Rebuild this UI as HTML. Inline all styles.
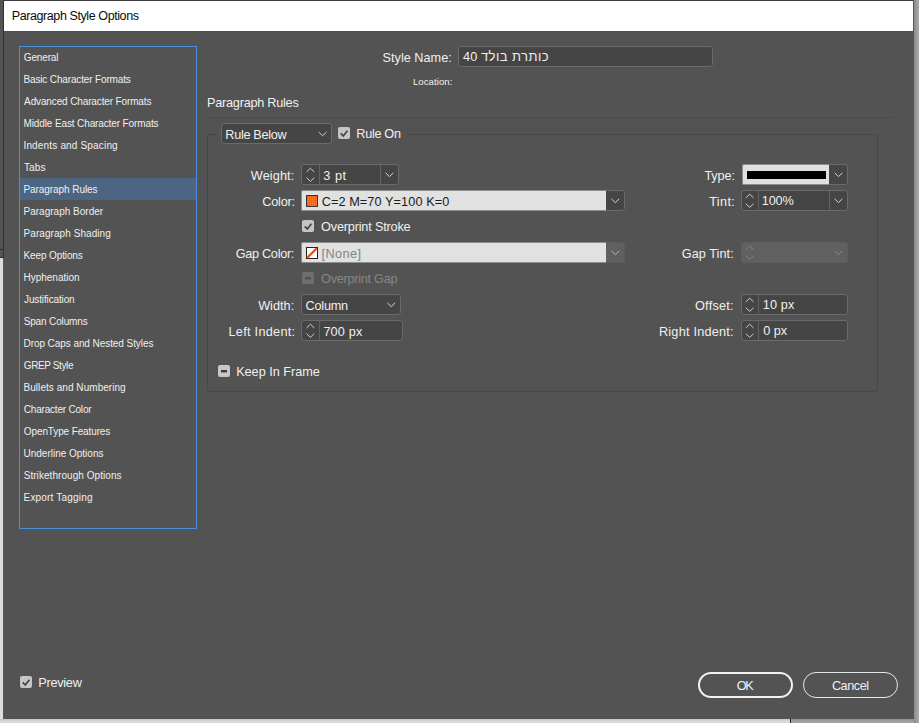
<!DOCTYPE html>
<html lang="en"><head><meta charset="utf-8"><title>Paragraph Style Options</title>
<style>
html,body{margin:0;padding:0}
body{width:919px;height:723px;position:relative;overflow:hidden;background:#a2a2a2;font-family:"Liberation Sans","DejaVu Sans",sans-serif}
.bg{position:absolute}
#dlg{position:absolute;left:3px;top:0;width:911px;height:719px;background:#535353;box-sizing:border-box}
#titlebar{position:absolute;left:4px;top:1px;width:909px;height:30px;background:#fff}
.t,.ttl,.li{position:absolute;white-space:pre;line-height:30px;height:30px;color:#f0f0f0}
ul{margin:0;padding:0;list-style:none}
.btn{position:absolute;width:95px;height:26px;box-sizing:border-box;border-radius:13px;background:none;padding:0;margin:0;font:inherit;color:inherit;overflow:visible}
.box{position:absolute;box-sizing:border-box;border:1px solid #6a6a6a;border-radius:3px;background:#454545}
.lf{position:absolute;box-sizing:border-box;background:#e1e1e1;border:1px solid #8e8e8e;border-right:0;border-radius:2px 0 0 2px}
.div{position:absolute;width:1px;background:#646464}
.cb{position:absolute;width:12px;height:12px;border-radius:2px;background:#c6c6c6}
svg{position:absolute;left:0;top:0;overflow:visible}
</style></head><body>

<div class="bg" style="left:0;top:0;width:4px;height:258px;background:#545454"></div>
<div class="bg" style="left:0;top:249px;width:3px;height:1px;background:#3a2a33"></div>
<div class="bg" style="left:0;top:257px;width:3px;height:1px;background:#3a2a33"></div>
<div class="bg" style="left:0;top:258px;width:4px;height:465px;background:#dcdcdc"></div>
<div class="bg" style="left:0;top:719px;width:790px;height:4px;background:linear-gradient(#c4c4c4,#dadada 60%)"></div>
<div class="bg" style="left:790px;top:719px;width:1px;height:4px;background:#2e2028"></div>
<div class="bg" style="left:791px;top:719px;width:128px;height:4px;background:linear-gradient(#8e8e8e,#a4a4a4 70%)"></div>
<div class="bg" style="left:914px;top:0;width:5px;height:723px;background:linear-gradient(90deg,#8a8a8a,#a6a6a6 80%)"></div>
<div id="dlg" role="dialog" aria-label="Paragraph Style Options">
</div>
<div class="bg" style="left:3px;top:0;width:1px;height:258px;background:#3a2c34"></div>
<div class="bg" style="left:3px;top:258px;width:1px;height:461px;background:#565656"></div>
<div class="bg" style="left:3px;top:0;width:911px;height:1px;background:#3c3a3c"></div>
<div class="bg" style="left:913px;top:0;width:1px;height:719px;background:#575557"></div>
<div id="titlebar"><span class="ttl" style="left:7.78px;top:0.00px;font-size:12.5px;letter-spacing:-0.41px;color:#0c0c0c">Paragraph Style Options</span></div>
<div class="bg" style="left:4px;top:31px;width:909px;height:1px;background:#4e4e4e"></div>
<div style="position:absolute;left:19px;top:46px;width:178px;height:483px;box-sizing:border-box;border:1px solid #4a8fdc"></div>
<div style="position:absolute;left:20px;top:178px;width:176px;height:22px;background:#4b6583"></div>
<div class="bg" style="left:207px;top:117px;width:686px;height:1px;background:#494949"></div>
<div style="position:absolute;left:207px;top:134px;width:671px;height:258px;box-sizing:border-box;border:1px solid #474747;border-radius:3px"></div>
<div class="bg" style="left:218px;top:133px;width:189px;height:3px;background:#535353"></div>
<div class="box" style="left:458px;top:46px;width:255px;height:21px"></div>
<div class="box" style="left:221px;top:123px;width:111px;height:21px"></div>
<div class="box" style="left:301px;top:164px;width:98px;height:21px"></div>
<div class="div" style="left:319px;top:165px;height:19px"></div><div class="div" style="left:380px;top:165px;height:19px"></div>
<div class="box" style="left:301px;top:190px;width:324px;height:21px"></div>
<div class="lf" style="left:301px;top:190px;width:305px;height:21px"></div>
<div class="bg" style="left:306px;top:195px;width:12px;height:12px;box-sizing:border-box;border:1px solid #3c3432;background:#f26419"></div>
<div class="box" style="left:301px;top:242px;width:324px;height:21px;background:#606060;border-color:#5c5c5c"></div>
<div class="lf" style="left:301px;top:242px;width:305px;height:21px"></div>
<div class="bg" style="left:306px;top:247px;width:12px;height:12px;box-sizing:border-box;border:1px solid #2a2020;background:#fff"></div>
<div class="box" style="left:301px;top:294px;width:100px;height:21px"></div>
<div class="box" style="left:301px;top:320px;width:102px;height:21px"></div>
<div class="div" style="left:319px;top:321px;height:19px"></div>
<div class="box" style="left:742px;top:164px;width:106px;height:21px"></div>
<div class="lf" style="left:742px;top:164px;width:87px;height:21px"></div>
<div class="bg" style="left:747px;top:171px;width:79px;height:8px;background:#000"></div>
<div class="box" style="left:741px;top:190px;width:107px;height:21px"></div>
<div class="div" style="left:758px;top:191px;height:19px"></div><div class="div" style="left:829px;top:191px;height:19px"></div>
<div class="box" style="left:741px;top:242px;width:107px;height:21px;background:#606060;border-color:#5e5e5e"></div>
<div class="box" style="left:741px;top:294px;width:107px;height:21px"></div><div class="div" style="left:758px;top:295px;height:19px"></div>
<div class="box" style="left:741px;top:320px;width:107px;height:21px"></div><div class="div" style="left:758px;top:321px;height:19px"></div>
<div class="cb" style="left:338px;top:127px"></div>
<div class="cb" style="left:302px;top:220px"></div>
<div class="cb" style="left:20px;top:676px"></div>
<div class="cb" style="left:218px;top:365px;background:#c8c8c8"></div>
<div class="cb" style="left:302px;top:272px;background:#6f6f6f"></div>
<button type="button" class="btn" style="left:698px;top:672px;border:2px solid #f2f2f2"><span class="t" style="left:36.72px;top:-3.00px;font-size:12.7px;letter-spacing:-1.25px">OK</span></button>
<button type="button" class="btn" style="left:803px;top:672px;border:1px solid #e6e6e6"><span class="t" style="left:27.89px;top:-2.00px;font-size:12.7px;letter-spacing:-0.45px">Cancel</span></button>
<svg width="919" height="723" viewBox="0 0 919 723">
<path d="M340.7 133.4L343.3 136.0L347.4 130.7" stroke="#444444" stroke-width="1.7" fill="none"/>
<path d="M304.7 226.4L307.3 229.0L311.4 223.7" stroke="#444444" stroke-width="1.7" fill="none"/>
<path d="M22.7 682.4L25.3 685.0L29.4 679.7" stroke="#444444" stroke-width="1.7" fill="none"/>
<rect x="221" y="370" width="6" height="2.4" fill="#3e3e3e"/>
<rect x="305" y="277" width="6" height="2.4" fill="#525252"/>
<path d="M307.2 257.8L316.8 248.2" stroke="#fa4a08" stroke-width="2.3"/>
<g fill="#f5823f"><rect x="308" y="197" width="1" height="1"/><rect x="308" y="199" width="1" height="1"/><rect x="308" y="201" width="1" height="1"/><rect x="308" y="203" width="1" height="1"/><rect x="310" y="197" width="1" height="1"/><rect x="310" y="199" width="1" height="1"/><rect x="310" y="201" width="1" height="1"/><rect x="310" y="203" width="1" height="1"/><rect x="310" y="205" width="1" height="1"/><rect x="312" y="197" width="1" height="1"/><rect x="312" y="199" width="1" height="1"/><rect x="312" y="201" width="1" height="1"/><rect x="312" y="203" width="1" height="1"/><rect x="312" y="205" width="1" height="1"/><rect x="314" y="197" width="1" height="1"/><rect x="314" y="199" width="1" height="1"/><rect x="314" y="201" width="1" height="1"/><rect x="314" y="203" width="1" height="1"/><rect x="314" y="205" width="1" height="1"/><rect x="316" y="197" width="1" height="1"/><rect x="316" y="199" width="1" height="1"/><rect x="316" y="201" width="1" height="1"/><rect x="316" y="203" width="1" height="1"/><rect x="316" y="205" width="1" height="1"/></g>
<path d="M319.0 132.3L322.6 135.8L326.2 132.3" stroke="#d6d6d6" stroke-width="1.0" fill="none" stroke-linecap="round" stroke-linejoin="round"/>
<path d="M385.8 173.1L389.4 176.6L393.0 173.1" stroke="#d6d6d6" stroke-width="1.0" fill="none" stroke-linecap="round" stroke-linejoin="round"/>
<path d="M611.7 199.1L615.3 202.6L618.9 199.1" stroke="#d6d6d6" stroke-width="1.0" fill="none" stroke-linecap="round" stroke-linejoin="round"/>
<path d="M611.7 251.1L615.3 254.6L618.9 251.1" stroke="#b4b4b4" stroke-width="1.0" fill="none" stroke-linecap="round" stroke-linejoin="round"/>
<path d="M387.6 303.1L391.2 306.6L394.8 303.1" stroke="#d6d6d6" stroke-width="1.0" fill="none" stroke-linecap="round" stroke-linejoin="round"/>
<path d="M834.9 173.1L838.5 176.6L842.1 173.1" stroke="#d6d6d6" stroke-width="1.0" fill="none" stroke-linecap="round" stroke-linejoin="round"/>
<path d="M834.9 199.1L838.5 202.6L842.1 199.1" stroke="#d6d6d6" stroke-width="1.0" fill="none" stroke-linecap="round" stroke-linejoin="round"/>
<path d="M834.9 251.1L838.5 254.6L842.1 251.1" stroke="#8c8c8c" stroke-width="1.0" fill="none" stroke-linecap="round" stroke-linejoin="round"/>
<path d="M306.8 171.7L310.4 168.2L314.0 171.7" stroke="#cfcfcf" stroke-width="1.0" fill="none" stroke-linecap="round" stroke-linejoin="round"/>
<path d="M306.8 177.9L310.4 181.4L314.0 177.9" stroke="#cfcfcf" stroke-width="1.0" fill="none" stroke-linecap="round" stroke-linejoin="round"/>
<path d="M306.8 327.7L310.4 324.2L314.0 327.7" stroke="#cfcfcf" stroke-width="1.0" fill="none" stroke-linecap="round" stroke-linejoin="round"/>
<path d="M306.8 333.9L310.4 337.4L314.0 333.9" stroke="#cfcfcf" stroke-width="1.0" fill="none" stroke-linecap="round" stroke-linejoin="round"/>
<path d="M746.1 197.7L749.7 194.2L753.3 197.7" stroke="#cfcfcf" stroke-width="1.0" fill="none" stroke-linecap="round" stroke-linejoin="round"/>
<path d="M746.1 203.9L749.7 207.4L753.3 203.9" stroke="#cfcfcf" stroke-width="1.0" fill="none" stroke-linecap="round" stroke-linejoin="round"/>
<path d="M746.1 301.7L749.7 298.2L753.3 301.7" stroke="#cfcfcf" stroke-width="1.0" fill="none" stroke-linecap="round" stroke-linejoin="round"/>
<path d="M746.1 307.9L749.7 311.4L753.3 307.9" stroke="#cfcfcf" stroke-width="1.0" fill="none" stroke-linecap="round" stroke-linejoin="round"/>
<path d="M746.1 327.7L749.7 324.2L753.3 327.7" stroke="#cfcfcf" stroke-width="1.0" fill="none" stroke-linecap="round" stroke-linejoin="round"/>
<path d="M746.1 333.9L749.7 337.4L753.3 333.9" stroke="#cfcfcf" stroke-width="1.0" fill="none" stroke-linecap="round" stroke-linejoin="round"/>
<path d="M746.1 249.7L749.7 246.2L753.3 249.7" stroke="#858585" stroke-width="1.0" fill="none" stroke-linecap="round" stroke-linejoin="round"/>
<path d="M746.1 255.9L749.7 259.4L753.3 255.9" stroke="#858585" stroke-width="1.0" fill="none" stroke-linecap="round" stroke-linejoin="round"/>
</svg>
<ul id="cats" role="listbox" aria-label="Categories">
<li class="li" role="option" style="left:23.82px;top:43.00px;font-size:10px;letter-spacing:-0.15px">General</li>
<li class="li" role="option" style="left:23.52px;top:65.00px;font-size:10px;letter-spacing:-0.15px">Basic Character Formats</li>
<li class="li" role="option" style="left:24.10px;top:87.00px;font-size:10px;letter-spacing:-0.13px">Advanced Character Formats</li>
<li class="li" role="option" style="left:23.52px;top:109.00px;font-size:10px;letter-spacing:-0.12px">Middle East Character Formats</li>
<li class="li" role="option" style="left:23.45px;top:131.00px;font-size:10px;letter-spacing:0.17px">Indents and Spacing</li>
<li class="li" role="option" style="left:23.95px;top:153.00px;font-size:10px;letter-spacing:0.15px">Tabs</li>
<li class="li" role="option" aria-selected="true" style="left:23.52px;top:175.00px;font-size:10px;letter-spacing:-0.07px">Paragraph Rules</li>
<li class="li" role="option" style="left:23.52px;top:197.00px;font-size:10px;letter-spacing:0.01px">Paragraph Border</li>
<li class="li" role="option" style="left:23.52px;top:219.00px;font-size:10px;letter-spacing:0.07px">Paragraph Shading</li>
<li class="li" role="option" style="left:23.52px;top:241.00px;font-size:10px;letter-spacing:-0.12px">Keep Options</li>
<li class="li" role="option" style="left:23.52px;top:263.00px;font-size:10px;letter-spacing:-0.01px">Hyphenation</li>
<li class="li" role="option" style="left:24.05px;top:285.00px;font-size:10px;letter-spacing:-0.14px">Justification</li>
<li class="li" role="option" style="left:23.66px;top:307.00px;font-size:10px;letter-spacing:-0.14px">Span Columns</li>
<li class="li" role="option" style="left:23.52px;top:329.00px;font-size:10px;letter-spacing:-0.07px">Drop Caps and Nested Styles</li>
<li class="li" role="option" style="left:23.82px;top:351.00px;font-size:10px;letter-spacing:-0.39px">GREP Style</li>
<li class="li" role="option" style="left:23.52px;top:373.00px;font-size:10px;letter-spacing:0.05px">Bullets and Numbering</li>
<li class="li" role="option" style="left:23.81px;top:395.00px;font-size:10px;letter-spacing:-0.2px">Character Color</li>
<li class="li" role="option" style="left:23.85px;top:417.00px;font-size:10px;letter-spacing:-0.12px">OpenType Features</li>
<li class="li" role="option" style="left:23.55px;top:439.00px;font-size:10px;letter-spacing:-0.01px">Underline Options</li>
<li class="li" role="option" style="left:23.66px;top:461.00px;font-size:10px;letter-spacing:0.06px">Strikethrough Options</li>
<li class="li" role="option" style="left:23.52px;top:483.00px;font-size:10px;letter-spacing:0.19px">Export Tagging</li>
</ul>
<span class="t" style="left:382.58px;top:43.00px;font-size:12.7px;letter-spacing:0.01px">Style Name:</span>
<span class="t" style="left:412.95px;top:67.00px;font-size:9.6px;letter-spacing:0.07px">Location:</span>
<span class="t" style="left:207.05px;top:88.00px;font-size:12.7px;letter-spacing:-0.25px">Paragraph Rules</span>
<span class="t" style="left:225.35px;top:120.00px;font-size:12.7px;letter-spacing:-0.32px">Rule Below</span>
<span class="t" style="left:356.35px;top:119.00px;font-size:12.7px;letter-spacing:-0.32px">Rule On</span>
<span class="t" style="left:250.84px;top:161.00px;font-size:12.7px;letter-spacing:0.11px">Weight:</span>
<span class="t" style="left:323.32px;top:161.00px;font-size:12.7px;letter-spacing:0.53px">3 pt</span>
<span class="t" style="left:262.29px;top:187.00px;font-size:12.7px;letter-spacing:-0.2px">Color:</span>
<span class="t" style="left:321.69px;top:187.00px;font-size:12.7px;letter-spacing:0.09px;color:#1c1c1c">C=2 M=70 Y=100 K=0</span>
<span class="t" style="left:321.12px;top:212.00px;font-size:12.7px;letter-spacing:-0.19px">Overprint Stroke</span>
<span class="t" style="left:235.66px;top:239.00px;font-size:12.7px;letter-spacing:-0.29px">Gap Color:</span>
<span class="t" style="left:321.45px;top:239.00px;font-size:12.7px;letter-spacing:0.46px;color:#7c8888">[None]</span>
<span class="t" style="left:321.12px;top:264.00px;font-size:12.7px;letter-spacing:-0.27px;color:#868686">Overprint Gap</span>
<span class="t" style="left:258.14px;top:291.00px;font-size:12.7px;letter-spacing:0.02px">Width:</span>
<span class="t" style="left:305.49px;top:291.00px;font-size:12.7px;letter-spacing:-0.21px">Column</span>
<span class="t" style="left:228.45px;top:317.00px;font-size:12.7px;letter-spacing:0.29px">Left Indent:</span>
<span class="t" style="left:323.40px;top:317.00px;font-size:12.7px;letter-spacing:0.16px">700 px</span>
<span class="t" style="left:236.15px;top:357.00px;font-size:12.7px;letter-spacing:-0.02px">Keep In Frame</span>
<span class="t" style="left:704.39px;top:161.00px;font-size:12.7px;letter-spacing:-0.09px">Type:</span>
<span class="t" style="left:709.19px;top:187.00px;font-size:12.7px;letter-spacing:0.36px">Tint:</span>
<span class="t" style="left:761.81px;top:186.00px;font-size:12.7px;letter-spacing:-0.17px">100%</span>
<span class="t" style="left:681.86px;top:239.00px;font-size:12.7px;letter-spacing:0.04px">Gap Tint:</span>
<span class="t" style="left:695.02px;top:291.00px;font-size:12.7px;letter-spacing:0.23px">Offset:</span>
<span class="t" style="left:762.81px;top:290.00px;font-size:12.7px;letter-spacing:0.13px">10 px</span>
<span class="t" style="left:658.95px;top:317.00px;font-size:12.7px;letter-spacing:0.22px">Right Indent:</span>
<span class="t" style="left:763.22px;top:316.00px;font-size:12.7px;letter-spacing:-0.03px">0 px</span>
<span class="t" style="left:38.35px;top:668.00px;font-size:12.7px;letter-spacing:-0.28px">Preview</span>
<span class="t" style="left:462.89px;top:42.00px;font-size:12.7px;letter-spacing:0.29px">40</span>
<span class="t" style="left:480.91px;top:42.00px;font-size:13.0px;letter-spacing:0.46px">כותרת בולד</span>
</body></html>
